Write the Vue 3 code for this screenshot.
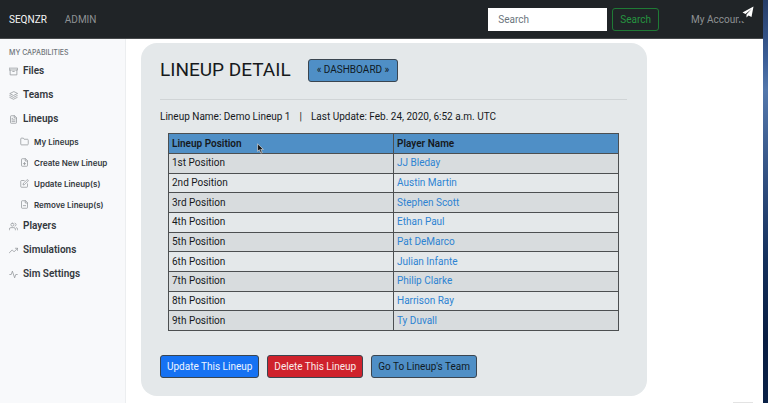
<script setup>
const archive = ['M21 8v13H3V8', 'M1 3h22v5H1z', 'M10 12h4']
const layers = ['M12 2 2 7l10 5 10-5z', 'M2 17l10 5 10-5', 'M2 12l10 5 10-5']
const fileText = ['M14 2H6a2 2 0 0 0-2 2v16a2 2 0 0 0 2 2h12a2 2 0 0 0 2-2V8z', 'M14 2v6h6', 'M16 13H8', 'M16 17H8', 'M10 9H8']
const folder = ['M22 19a2 2 0 0 1-2 2H4a2 2 0 0 1-2-2V5a2 2 0 0 1 2-2h5l2 3h9a2 2 0 0 1 2 2z']
const filePlus = ['M14 2H6a2 2 0 0 0-2 2v16a2 2 0 0 0 2 2h12a2 2 0 0 0 2-2V8z', 'M14 2v6h6', 'M12 18v-6', 'M9 15h6']
const edit = ['M11 4H4a2 2 0 0 0-2 2v14a2 2 0 0 0 2 2h14a2 2 0 0 0 2-2v-7', 'M18.5 2.5a2.12 2.12 0 0 1 3 3L12 15l-4 1 1-4z']
const fileMinus = ['M14 2H6a2 2 0 0 0-2 2v16a2 2 0 0 0 2 2h12a2 2 0 0 0 2-2V8z', 'M14 2v6h6', 'M9 15h6']
const users = ['M17 21v-2a4 4 0 0 0-4-4H5a4 4 0 0 0-4 4v2', 'M9 3a4 4 0 1 0 0 8a4 4 0 0 0 0-8', 'M23 21v-2a4 4 0 0 0-3-3.87', 'M16 3.13a4 4 0 0 1 0 7.75']
const trending = ['M23 6l-9.5 9.5-5-5L1 18', 'M17 6h6v6']
const activity = ['M22 12h-4l-3 9L9 3l-3 9H2']

const menu = [
  { label: 'Files', icon: archive },
  { label: 'Teams', icon: layers },
  {
    label: 'Lineups',
    icon: fileText,
    children: [
      { label: 'My Lineups', icon: folder },
      { label: 'Create New Lineup', icon: filePlus },
      { label: 'Update Lineup(s)', icon: edit },
      { label: 'Remove Lineup(s)', icon: fileMinus },
    ],
  },
  { label: 'Players', icon: users },
  { label: 'Simulations', icon: trending },
  { label: 'Sim Settings', icon: activity },
]

const lineup = [
  ['1st Position', 'JJ Bleday'],
  ['2nd Position', 'Austin Martin'],
  ['3rd Position', 'Stephen Scott'],
  ['4th Position', 'Ethan Paul'],
  ['5th Position', 'Pat DeMarco'],
  ['6th Position', 'Julian Infante'],
  ['7th Position', 'Philip Clarke'],
  ['8th Position', 'Harrison Ray'],
  ['9th Position', 'Ty Duvall'],
]
</script>

<template>
  <div class="desktop">
    <div class="window">
      <header class="navbar">
        <a class="brand" href="#">SEQNZR</a>
        <a class="nav-link" href="#">ADMIN</a>
        <form class="search" @submit.prevent>
          <input type="search" placeholder="Search" aria-label="Search" />
          <button class="search-btn" type="submit">Search</button>
        </form>
        <a class="nav-link account" href="#">My Account</a>
        <span class="share">
          <svg viewBox="0 0 24 24" aria-hidden="true">
            <path d="M23 1 1 13l6 3L19 6 9 17v6l4-4 6 3z" fill="#fff" />
          </svg>
        </span>
      </header>

      <div class="body">
        <nav class="sidebar" aria-label="My capabilities">
          <h2>MY CAPABILITIES</h2>
          <ul>
            <li v-for="item in menu" :key="item.label">
              <a class="item" href="#">
                <svg class="icon" viewBox="0 0 24 24" aria-hidden="true">
                  <path v-for="d in item.icon" :key="d" :d="d" />
                </svg>
                {{ item.label }}
              </a>
              <ul v-if="item.children" class="sub">
                <li v-for="child in item.children" :key="child.label">
                  <a class="subitem" href="#">
                    <svg class="icon" viewBox="0 0 24 24" aria-hidden="true">
                      <path v-for="d in child.icon" :key="d" :d="d" />
                    </svg>
                    {{ child.label }}
                  </a>
                </li>
              </ul>
            </li>
          </ul>
        </nav>

        <main class="content">
          <section class="card">
            <div class="title-row">
              <h1>LINEUP DETAIL</h1>
              <button class="btn info wide" type="button">« DASHBOARD »</button>
            </div>
            <hr />
            <p class="meta">
              <span>Lineup Name: Demo Lineup 1</span>
              <span>|</span>
              <span>Last Update: Feb. 24, 2020, 6:52 a.m. UTC</span>
            </p>
            <div class="table-wrap">
              <table>
                <thead>
                  <tr>
                    <th scope="col">Lineup Position</th>
                    <th scope="col">Player Name</th>
                  </tr>
                </thead>
                <tbody>
                  <tr v-for="[position, player] in lineup" :key="position">
                    <td>{{ position }}</td>
                    <td><a href="#">{{ player }}</a></td>
                  </tr>
                </tbody>
              </table>
              <svg class="cursor" viewBox="0 0 12 18" aria-hidden="true">
                <path d="M1 1v13l3-3 2.500 6 2.500-1-2.500-5.500H11z" fill="#111" stroke="#ddd" stroke-width="1.200" />
              </svg>
            </div>
            <div class="actions">
              <button class="btn primary" type="button">Update This Lineup</button>
              <button class="btn danger" type="button">Delete This Lineup</button>
              <button class="btn info" type="button">Go To Lineup's Team</button>
            </div>
          </section>
          <div class="corner-tab"></div>
        </main>
      </div>
    </div>
  </div>
</template>

<style>
body {
  margin: 0;
  overflow: hidden;
}
</style>

<style scoped>
* {
  box-sizing: border-box;
}
.desktop {
  min-height: 100vh;
  display: flex;
  padding-right: 5px;
  background: linear-gradient(#263d68 0, #3c5f98 60px, #5478ac 90px, #314f80 180px, #14305c 260px, #081d42 340px, #0a2147 100%);
  font-family: Roboto, "Liberation Sans", sans-serif;
  font-size: 10px;
  line-height: 14px;
  color: #16191c;
}
.window {
  flex: 1;
  display: flex;
  flex-direction: column;
  background: #fff;
}
a {
  text-decoration: none;
}
.navbar {
  position: relative;
  display: flex;
  align-items: center;
  padding: 8px 19px 7px 9px;
  background: #202427;
  border-bottom: 1px solid #46494b;
}
.brand {
  color: #f5f6f6;
  margin-right: 18px;
}
.nav-link {
  color: #8e9193;
}
.search {
  display: flex;
  gap: 5px;
  margin-left: auto;
}
.search input {
  width: 119px;
  height: 23px;
  padding: 0 10px;
  border: 0;
  background: #fff;
  color: #495057;
  font: inherit;
}
.search input::placeholder {
  color: #6c757d;
  opacity: 1;
}
.search-btn {
  height: 23px;
  padding: 0 7px;
  border: 1px solid #1f7a35;
  border-radius: 3px;
  background: transparent;
  color: #269440;
  font: inherit;
}
.account {
  margin-left: 32px;
}
.share {
  position: absolute;
  top: 3px;
  right: 6px;
  display: flex;
  padding: 3px;
  background: #202427;
}
.share svg {
  width: 12px;
  height: 12px;
}
.body {
  flex: 1;
  display: flex;
}
.sidebar {
  flex: 0 0 126px;
  padding: 8px 0 0 9px;
  background: #f8f9fb;
  border-right: 1px solid #eceef0;
}
.sidebar h2 {
  margin: 0;
  font-family: Inter, "Liberation Sans", sans-serif;
  font-size: 7px;
  line-height: 12px;
  font-weight: 500;
  color: #6d7378;
}
ul {
  margin: 0;
  padding: 0;
  list-style: none;
}
.item,
.subitem {
  display: flex;
  align-items: center;
  gap: 5px;
  color: #33383d;
  font-weight: 600;
}
.item {
  height: 24px;
}
.sub {
  margin-bottom: -1px;
  padding: 0 0 0 11px;
}
.subitem {
  height: 21px;
  font-family: Inter, "Liberation Sans", sans-serif;
  font-size: 8px;
}
.icon {
  width: 9px;
  height: 9px;
  fill: none;
  stroke: #92969a;
  stroke-width: 2;
  stroke-linecap: round;
  stroke-linejoin: round;
}
.content {
  position: relative;
  flex: 1;
  padding: 4px 116px 7px 15px;
}
.card {
  padding: 15px 20px 18px 19px;
  border-radius: 16px;
  background: #e4e8ea;
}
.title-row {
  display: flex;
  align-items: center;
  gap: 17px;
}
h1 {
  margin: 0;
  font-size: 19px;
  line-height: 24px;
  font-weight: 400;
}
hr {
  margin: 17px 0 10px;
  border: 0;
  border-top: 1px solid #d0d4d6;
}
.meta {
  display: flex;
  gap: 9px;
  margin: 0;
}
.table-wrap {
  position: relative;
  margin: 9px 8px 24px;
}
table {
  width: 100%;
  height: 198px;
  border-collapse: collapse;
  table-layout: fixed;
}
th,
td {
  padding: 0 3px;
  border: 1px solid #4c4f51;
  text-align: left;
}
th {
  height: 20px;
  background: #4f8fc6;
  font-weight: 600;
}
tbody tr:nth-child(odd) {
  background: #d8dcde;
}
td a {
  color: #2d83d2;
}
.cursor {
  position: absolute;
  left: 89px;
  top: 10px;
  width: 7px;
  height: 11px;
}
.actions {
  display: flex;
  gap: 8px;
}
.btn {
  height: 23px;
  padding: 0 6px;
  border: 1px solid #3a4550;
  border-radius: 3px;
  font: inherit;
}
.wide {
  padding: 0 8px;
}
.info {
  background: #4f8fc6;
  color: #101a24;
}
.primary {
  background: #1672f3;
  color: #eef5ff;
}
.danger {
  background: #cf222c;
  color: #fbeaea;
}
.corner-tab {
  position: absolute;
  right: 10px;
  bottom: 0;
  width: 20px;
  height: 1px;
  background: #e3e3e3;
}
</style>
